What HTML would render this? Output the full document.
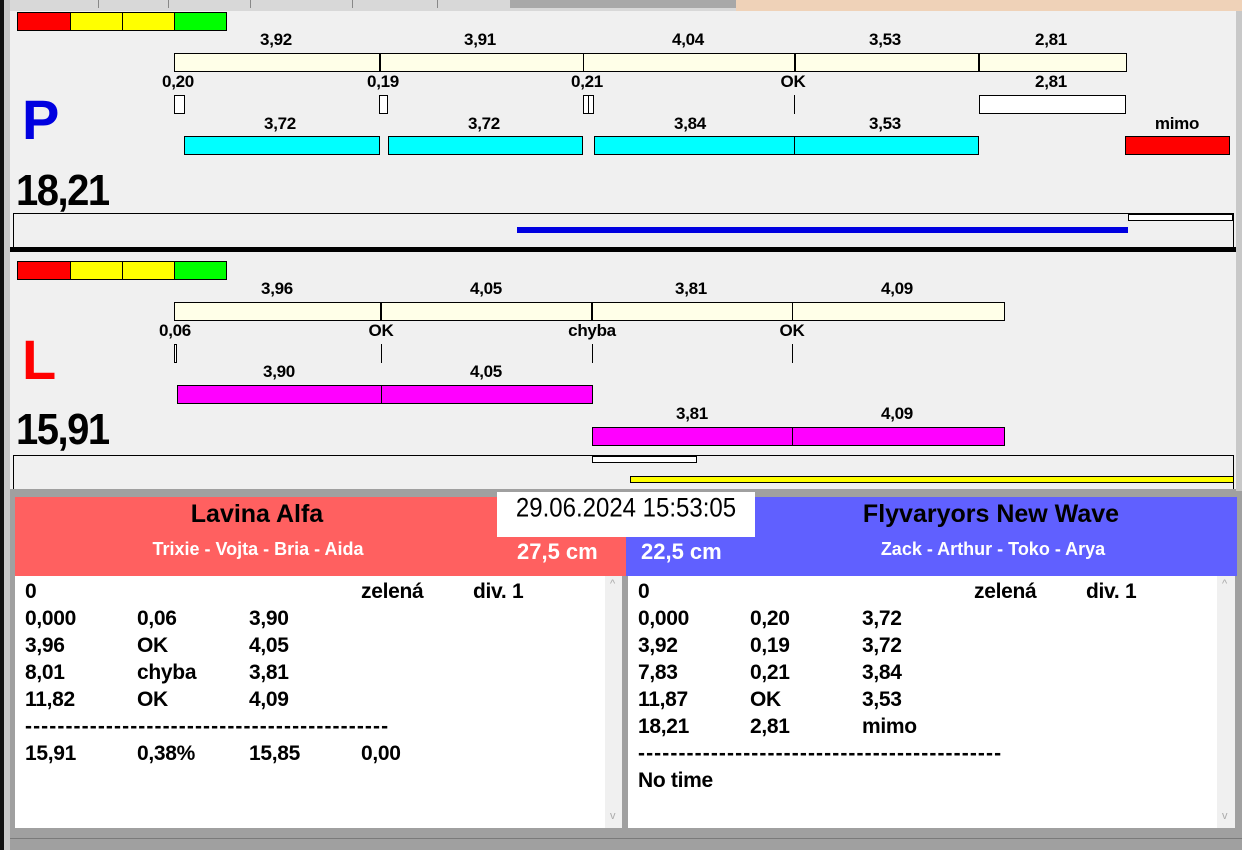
<!DOCTYPE html>
<html><head><meta charset="utf-8"><style>
*{margin:0;padding:0}
body{width:1242px;height:850px;position:relative;overflow:hidden;background:#a0a0a0;font-family:"Liberation Sans",sans-serif}
div{position:absolute}
.b{border:1px solid #000;box-sizing:border-box}
.t{font-weight:bold;font-size:17px;line-height:18px;transform:translateX(-50%);white-space:nowrap;letter-spacing:-0.3px}
.v{width:1px;background:#000}
.cr{background:#ffffe8}
.row{font-weight:bold;font-size:21px;line-height:27px;white-space:nowrap;letter-spacing:-0.3px}
.row span{position:absolute}
.dash{letter-spacing:1.1px}
</style></head><body>
<!-- window chrome -->
<div style="left:0;top:0;width:4px;height:850px;background:#111"></div>
<div style="left:4px;top:0;width:6px;height:850px;background:#c8c8c8"></div>
<div style="left:10px;top:0;width:726px;height:11px;background:#d8d8d8"></div>
<div style="left:98px;top:0;width:1px;height:8px;background:#888"></div>
<div style="left:168px;top:0;width:1px;height:8px;background:#888"></div>
<div style="left:250px;top:0;width:1px;height:8px;background:#888"></div>
<div style="left:352px;top:0;width:1px;height:8px;background:#888"></div>
<div style="left:437px;top:0;width:1px;height:8px;background:#888"></div>
<div style="left:510px;top:0;width:226px;height:8px;background:#a8a8a8"></div>
<div style="left:736px;top:0;width:506px;height:11px;background:#efd2b8"></div>
<div style="left:1236px;top:11px;width:6px;height:480px;background:#c8c8c8"></div>

<!-- P panel -->
<div style="left:10px;top:11px;width:1226px;height:237px;background:#f0f0f0"></div>
<div class="b" style="left:17px;top:12px;width:54px;height:19px;background:#f00"></div>
<div class="b" style="left:70px;top:12px;width:53px;height:19px;background:#ff0"></div>
<div class="b" style="left:122px;top:12px;width:53px;height:19px;background:#ff0"></div>
<div class="b" style="left:174px;top:12px;width:53px;height:19px;background:#0f0"></div>

<div class="t" style="left:276px;top:31px">3,92</div>
<div class="t" style="left:480px;top:31px">3,91</div>
<div class="t" style="left:688px;top:31px">4,04</div>
<div class="t" style="left:885px;top:31px">3,53</div>
<div class="t" style="left:1051px;top:31px">2,81</div>
<div class="b cr" style="left:174px;top:53px;width:953px;height:19px"></div>
<div class="v" style="left:379px;top:53px;height:19px;width:2px"></div>
<div class="v" style="left:583px;top:53px;height:19px"></div>
<div class="v" style="left:794px;top:53px;height:19px;width:2px"></div>
<div class="v" style="left:978px;top:53px;height:19px;width:2px"></div>

<div class="t" style="left:178px;top:73px">0,20</div>
<div class="t" style="left:383px;top:73px">0,19</div>
<div class="t" style="left:587px;top:73px">0,21</div>
<div class="t" style="left:793px;top:73px">OK</div>
<div class="t" style="left:1051px;top:73px">2,81</div>
<div class="b" style="left:174px;top:95px;width:11px;height:19px;background:#fff"></div>
<div class="b" style="left:379px;top:95px;width:9px;height:19px;background:#fff"></div>
<div class="b" style="left:583px;top:95px;width:6px;height:19px;background:#fff"></div>
<div class="b" style="left:588px;top:95px;width:6px;height:19px;background:#fff"></div>
<div class="v" style="left:794px;top:95px;height:19px"></div>
<div class="b" style="left:979px;top:95px;width:147px;height:19px;background:#fff"></div>

<div class="t" style="left:280px;top:115px">3,72</div>
<div class="t" style="left:484px;top:115px">3,72</div>
<div class="t" style="left:690px;top:115px">3,84</div>
<div class="t" style="left:885px;top:115px">3,53</div>
<div class="t" style="left:1177px;top:115px">mimo</div>
<div class="b" style="left:184px;top:136px;width:196px;height:19px;background:#0ff"></div>
<div class="b" style="left:388px;top:136px;width:195px;height:19px;background:#0ff"></div>
<div class="b" style="left:594px;top:136px;width:385px;height:19px;background:#0ff"></div>
<div class="v" style="left:794px;top:136px;height:19px"></div>
<div class="b" style="left:1125px;top:136px;width:105px;height:19px;background:#f00"></div>

<div style="left:22px;top:88px;font-weight:bold;font-size:56px;line-height:64px;color:#0000e0">P</div>
<div style="left:16px;top:170px;font-weight:bold;font-size:40px;line-height:46px;letter-spacing:-1.5px;transform:scaleY(1.1);transform-origin:0 100%">18,21</div>

<div style="left:13px;top:213px;width:1221px;height:1px;background:#000"></div>
<div style="left:13px;top:213px;width:1px;height:35px;background:#000"></div>
<div style="left:1233px;top:213px;width:1px;height:35px;background:#000"></div>
<div class="b" style="left:1128px;top:214px;width:105px;height:7px;background:#fff"></div>
<div style="left:517px;top:227px;width:611px;height:6px;background:#0000e0"></div>
<div style="left:10px;top:247px;width:1226px;height:5px;background:#000"></div>

<!-- L panel -->
<div style="left:10px;top:252px;width:1226px;height:237px;background:#f0f0f0"></div>
<div class="b" style="left:17px;top:261px;width:54px;height:19px;background:#f00"></div>
<div class="b" style="left:70px;top:261px;width:53px;height:19px;background:#ff0"></div>
<div class="b" style="left:122px;top:261px;width:53px;height:19px;background:#ff0"></div>
<div class="b" style="left:174px;top:261px;width:53px;height:19px;background:#0f0"></div>

<div class="t" style="left:277px;top:280px">3,96</div>
<div class="t" style="left:486px;top:280px">4,05</div>
<div class="t" style="left:691px;top:280px">3,81</div>
<div class="t" style="left:897px;top:280px">4,09</div>
<div class="b cr" style="left:174px;top:302px;width:831px;height:19px"></div>
<div class="v" style="left:380px;top:302px;height:19px;width:2px"></div>
<div class="v" style="left:591px;top:302px;height:19px;width:2px"></div>
<div class="v" style="left:792px;top:302px;height:19px"></div>

<div class="t" style="left:175px;top:322px">0,06</div>
<div class="t" style="left:381px;top:322px">OK</div>
<div class="t" style="left:592px;top:322px">chyba</div>
<div class="t" style="left:792px;top:322px">OK</div>
<div class="b" style="left:174px;top:344px;width:3px;height:19px;background:#fff"></div>
<div class="v" style="left:381px;top:344px;height:19px"></div>
<div class="v" style="left:592px;top:344px;height:19px"></div>
<div class="v" style="left:792px;top:344px;height:19px"></div>

<div class="t" style="left:279px;top:363px">3,90</div>
<div class="t" style="left:486px;top:363px">4,05</div>
<div class="b" style="left:177px;top:385px;width:416px;height:19px;background:#f0f"></div>
<div class="v" style="left:381px;top:385px;height:19px"></div>
<div class="t" style="left:692px;top:405px">3,81</div>
<div class="t" style="left:897px;top:405px">4,09</div>
<div class="b" style="left:592px;top:427px;width:413px;height:19px;background:#f0f"></div>
<div class="v" style="left:792px;top:427px;height:19px"></div>

<div style="left:22px;top:328px;font-weight:bold;font-size:56px;line-height:64px;color:#f00">L</div>
<div style="left:16px;top:409px;font-weight:bold;font-size:40px;line-height:46px;letter-spacing:-1.5px;transform:scaleY(1.1);transform-origin:0 100%">15,91</div>

<div style="left:13px;top:455px;width:1221px;height:1px;background:#000"></div>
<div style="left:13px;top:455px;width:1px;height:34px;background:#000"></div>
<div style="left:1233px;top:455px;width:1px;height:34px;background:#000"></div>
<div class="b" style="left:592px;top:456px;width:105px;height:7px;background:#fff"></div>
<div class="b" style="left:630px;top:476px;width:604px;height:7px;background:#ff0"></div>

<!-- bottom -->
<div style="left:15px;top:497px;width:611px;height:79px;background:#ff6060"></div>
<div style="left:626px;top:497px;width:611px;height:79px;background:#6060ff"></div>
<div style="left:497px;top:492px;width:258px;height:45px;background:#fff"></div>
<div style="left:497px;top:495px;width:258px;text-align:center;font-size:24px;line-height:28px;transform:scaleY(1.1)">29.06.2024 15:53:05</div>
<div style="left:15px;top:500px;width:484px;text-align:center;font-weight:bold;font-size:25px;line-height:28px">Lavina Alfa</div>
<div style="left:15px;top:538px;width:486px;text-align:center;font-weight:bold;font-size:18px;line-height:22px;color:#fff">Trixie - Vojta - Bria - Aida</div>
<div style="left:517px;top:539px;font-weight:bold;font-size:22px;line-height:26px;color:#fff">27,5 cm</div>
<div style="left:641px;top:539px;font-weight:bold;font-size:22px;line-height:26px;color:#fff">22,5 cm</div>
<div style="left:755px;top:500px;width:472px;text-align:center;font-weight:bold;font-size:25px;line-height:28px">Flyvaryors New Wave</div>
<div style="left:755px;top:538px;width:476px;text-align:center;font-weight:bold;font-size:18px;line-height:22px;color:#fff">Zack - Arthur - Toko - Arya</div>

<div style="left:15px;top:576px;width:590px;height:252px;background:#fff"></div>
<div style="left:605px;top:576px;width:17px;height:252px;background:#f0f0f0;color:#aaa;font-size:11px;text-align:center"><div style="left:5px;top:2px">^</div><div style="left:5px;top:234px">v</div></div>
<div style="left:628px;top:576px;width:589px;height:252px;background:#fff"></div>
<div style="left:1217px;top:576px;width:18px;height:252px;background:#f0f0f0;color:#aaa;font-size:11px"><div style="left:5px;top:2px">^</div><div style="left:5px;top:234px">v</div></div>
<div style="left:10px;top:838px;width:1232px;height:1px;background:#7a7a7a"></div>

<div class="row" style="left:25px;top:578px;width:580px;height:250px">
<span style="left:0;top:0">0</span><span style="left:336px;top:0">zelená</span><span style="left:448px;top:0">div. 1</span>
<span style="left:0;top:27px">0,000</span><span style="left:112px;top:27px">0,06</span><span style="left:224px;top:27px">3,90</span>
<span style="left:0;top:54px">3,96</span><span style="left:112px;top:54px">OK</span><span style="left:224px;top:54px">4,05</span>
<span style="left:0;top:81px">8,01</span><span style="left:112px;top:81px">chyba</span><span style="left:224px;top:81px">3,81</span>
<span style="left:0;top:108px">11,82</span><span style="left:112px;top:108px">OK</span><span style="left:224px;top:108px">4,09</span>
<span class="dash" style="left:0;top:135px">---------------------------------------------</span>
<span style="left:0;top:162px">15,91</span><span style="left:112px;top:162px">0,38%</span><span style="left:224px;top:162px">15,85</span><span style="left:336px;top:162px">0,00</span>
</div>
<div class="row" style="left:638px;top:578px;width:578px;height:250px">
<span style="left:0;top:0">0</span><span style="left:336px;top:0">zelená</span><span style="left:448px;top:0">div. 1</span>
<span style="left:0;top:27px">0,000</span><span style="left:112px;top:27px">0,20</span><span style="left:224px;top:27px">3,72</span>
<span style="left:0;top:54px">3,92</span><span style="left:112px;top:54px">0,19</span><span style="left:224px;top:54px">3,72</span>
<span style="left:0;top:81px">7,83</span><span style="left:112px;top:81px">0,21</span><span style="left:224px;top:81px">3,84</span>
<span style="left:0;top:108px">11,87</span><span style="left:112px;top:108px">OK</span><span style="left:224px;top:108px">3,53</span>
<span style="left:0;top:135px">18,21</span><span style="left:112px;top:135px">2,81</span><span style="left:224px;top:135px">mimo</span>
<span class="dash" style="left:0;top:162px">---------------------------------------------</span>
<span style="left:0;top:189px">No time</span>
</div>
</body></html>
